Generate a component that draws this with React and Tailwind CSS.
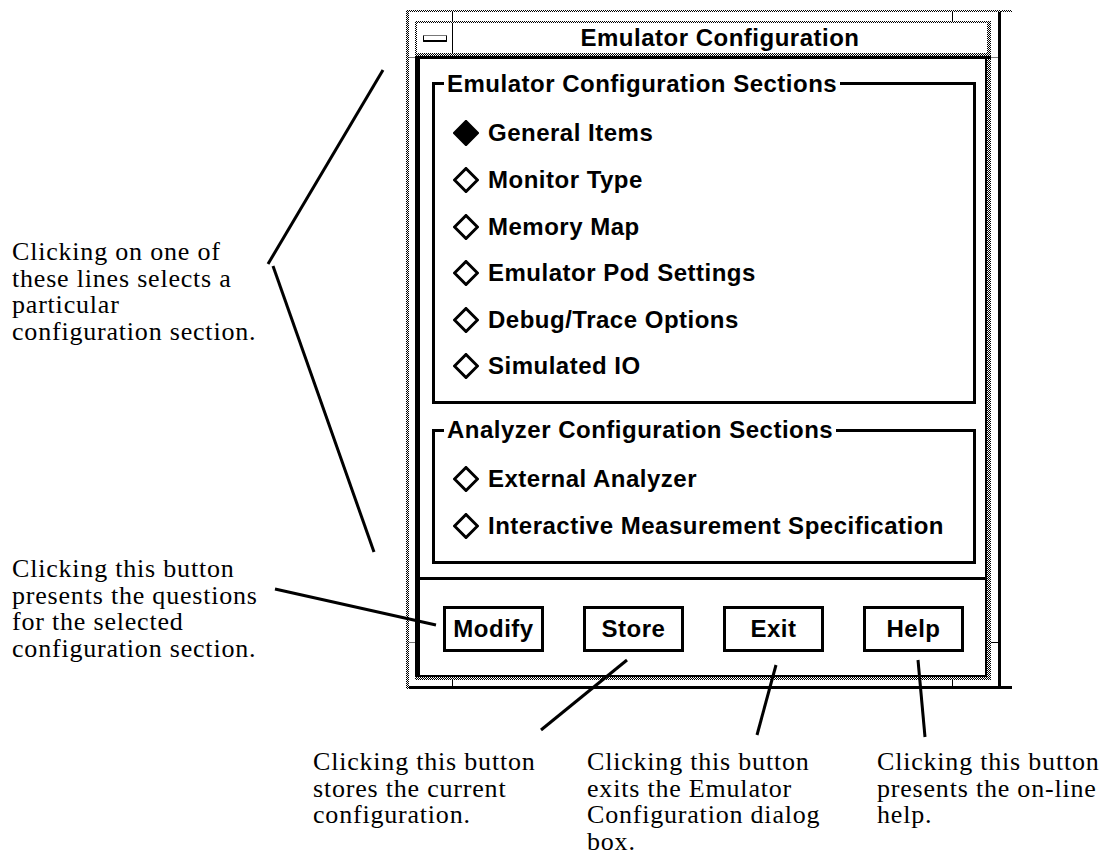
import React from "react";

const STIPPLE =
  "bg-[image:repeating-conic-gradient(#000_0%_25%,#fff_0%_50%)] bg-[length:2px_2px]";

function Diamond({ filled }) {
  return (
    <svg width="26" height="26" viewBox="0 0 26 26" className="shrink-0">
      <polygon
        points="13,1.5 24.5,13 13,24.5 1.5,13"
        fill={filled ? "#000" : "#fff"}
        stroke="#000"
        strokeWidth="3"
        strokeLinejoin="miter"
      />
    </svg>
  );
}

function Row({ label, filled, h }) {
  return (
    <div className={`flex items-center gap-[9px] pl-[18px] ${h}`}>
      <Diamond filled={filled} />
      <span className="leading-[24px]">{label}</span>
    </div>
  );
}

function Button({ label }) {
  return (
    <div className="w-[101px] h-[46px] border-[3px] border-black flex items-center justify-center leading-[24px]">
      {label}
    </div>
  );
}

function Window() {
  return (
    <div className={`relative w-[595px] h-[679px] pt-[2px] pl-[3px] ${STIPPLE}`}>
      <div className="w-full h-full bg-white border-r-[3px] border-b-[3px] border-black pt-[9px] pl-[6px] pr-[7px] pb-[6px]">
        <div className="flex flex-col w-[576px] h-[659px] font-['Liberation_Sans',Arial,sans-serif] font-bold text-[24px] tracking-[0.5px] text-black">
          {/* title bar */}
          <div className={`h-[38px] shrink-0 border-b-[3px] border-black pt-[2px] pl-[2px] pr-[4px] pb-[3px] ${STIPPLE}`}>
            <div className="flex h-full bg-white">
              <div className="w-[36px] h-full border-r border-black flex items-center justify-center">
                <div className="w-[24px] h-[7px] border-x border-b-2 border-t border-black border-t-[#777] rounded-[1px]" />
              </div>
              <div className="flex-1 flex items-center justify-center leading-[24px]">
                Emulator Configuration
              </div>
            </div>
          </div>
          {/* body */}
          <div className={`flex-1 pr-[4px] pb-[3px] ${STIPPLE}`}>
            <div className="h-full bg-white border-l-[5px] border-r-[2px] border-b-[2px] border-black flex flex-col">
              <fieldset className="mt-[10.5px] ml-[12px] w-[544px] border-[3px] border-black pb-[11px]">
                <legend className="ml-[9px] px-[3px] leading-[28px]">
                  Emulator Configuration Sections
                </legend>
                <div className="pt-[12.7px]">
                  <Row label="General Items" filled h="h-[46.6px]" />
                  <Row label="Monitor Type" h="h-[46.6px]" />
                  <Row label="Memory Map" h="h-[46.6px]" />
                  <Row label="Emulator Pod Settings" h="h-[46.6px]" />
                  <Row label="Debug/Trace Options" h="h-[46.6px]" />
                  <Row label="Simulated IO" h="h-[46.6px]" />
                </div>
              </fieldset>
              <fieldset className="mt-[12.5px] ml-[12px] w-[544px] border-[3px] border-black pb-[11.5px]">
                <legend className="ml-[9px] px-[3px] leading-[28px]">
                  Analyzer Configuration Sections
                </legend>
                <div className="pt-[11px]">
                  <Row label="External Analyzer" h="h-[47px]" />
                  <Row label="Interactive Measurement Specification" h="h-[47px]" />
                </div>
              </fieldset>
              <div className="mt-[13px] h-[3px] bg-black shrink-0" />
              <div className="flex pt-[26px] pl-[23px] gap-[39px]">
                <Button label="Modify" />
                <Button label="Store" />
                <Button label="Exit" />
                <Button label="Help" />
              </div>
            </div>
          </div>
        </div>
      </div>
      {/* resize corner markers */}
      <div className="absolute left-[46px] top-[2px] w-px h-[9px] bg-black" />
      <div className="absolute left-[546px] top-[2px] w-px h-[9px] bg-black" />
      <div className="absolute left-[3px] top-[47px] w-[6px] h-px bg-[#777]" />
      <div className="absolute left-[3px] top-[632px] w-[6px] h-px bg-[#777]" />
      <div className="absolute left-[585px] top-[47px] w-[7px] h-px bg-[#777]" />
      <div className="absolute left-[585px] top-[632px] w-[7px] h-px bg-black" />
      <div className="absolute left-[46px] top-[670px] w-px h-[6px] bg-black" />
      <div className="absolute left-[546px] top-[670px] w-px h-[6px] bg-black" />
      <div className={`absolute left-[595px] top-0 w-[11px] h-[2px] ${STIPPLE}`} />
      <div className="absolute left-[595px] top-[676px] w-[11px] h-[3px] bg-black" />
    </div>
  );
}

const NOTE =
  "font-['Liberation_Serif','Times_New_Roman',serif] text-[26px] leading-[26.7px] tracking-[0.8px] text-black whitespace-nowrap";

export default function App() {
  return (
    <div className="relative w-[1106px] h-[863px] overflow-hidden bg-white">
      <div className="flex items-start">
        <div className="w-[406px] shrink-0 pl-[12px] pt-[239px]">
          <p className={NOTE}>
            Clicking on one of
            <br />
            these lines selects a
            <br />
            particular
            <br />
            configuration section.
          </p>
          <p className={`${NOTE} mt-[210px]`}>
            Clicking this button
            <br />
            presents the questions
            <br />
            for the selected
            <br />
            configuration section.
          </p>
        </div>
        <div className="pt-[10px]">
          <Window />
        </div>
      </div>
      <div className="flex pl-[313px] mt-[60px]">
        <p className={`${NOTE} w-[274px] shrink-0`}>
          Clicking this button
          <br />
          stores the current
          <br />
          configuration.
        </p>
        <p className={`${NOTE} w-[290px] shrink-0`}>
          Clicking this button
          <br />
          exits the Emulator
          <br />
          Configuration dialog
          <br />
          box.
        </p>
        <p className={NOTE}>
          Clicking this button
          <br />
          presents the on-line
          <br />
          help.
        </p>
      </div>
      <svg
        className="absolute inset-0 pointer-events-none"
        width="1106"
        height="863"
        viewBox="0 0 1106 863"
      >
        <g stroke="#000" strokeWidth="3" fill="none">
          <line x1="383" y1="70" x2="268" y2="264" />
          <line x1="273" y1="266" x2="374" y2="552" />
          <line x1="275" y1="589" x2="436" y2="625" />
          <line x1="627" y1="660" x2="541" y2="730" />
          <line x1="776" y1="665" x2="757" y2="735" />
          <line x1="918" y1="660" x2="925" y2="737" />
        </g>
      </svg>
    </div>
  );
}
